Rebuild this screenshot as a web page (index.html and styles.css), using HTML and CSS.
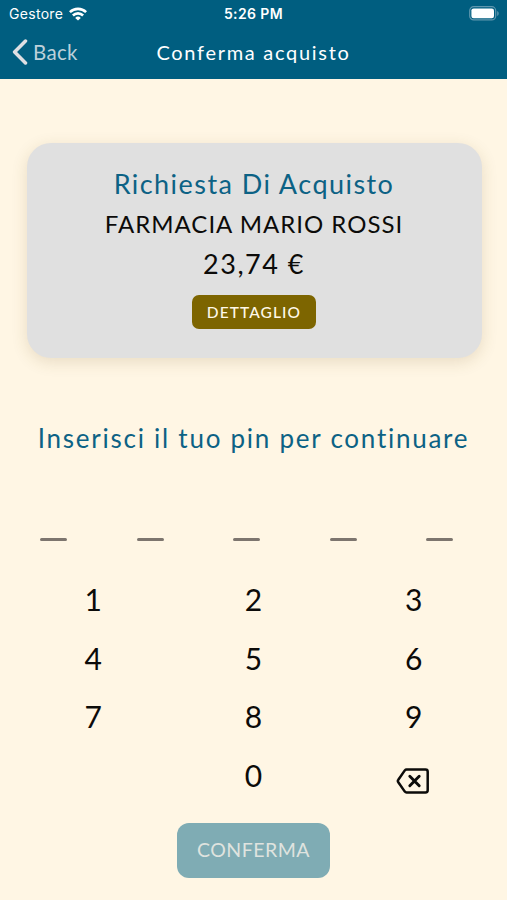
FILE: index.html
```html
<!DOCTYPE html>
<html lang="it">
<head>
<meta charset="utf-8">
<meta name="viewport" content="width=device-width, initial-scale=1">
<title>Conferma acquisto</title>
<link rel="stylesheet" href="styles.css">
</head>
<body>
<header class="header">
  <div class="status">
    <div class="carrier"><span>Gestore</span>
      <svg class="wifi" viewBox="0 0 18 14" width="18" height="14"><g fill="none" stroke="#fff" stroke-width="2.600"><path d="M.9 5.2a11.5 11.5 0 0 1 16.2 0"/><path d="M3.9 8.500a7.2 7.2 0 0 1 10.2 0"/></g><path d="M9 13.6 6.2 10.9a4 4 0 0 1 5.6 0Z" fill="#fff"/></svg>
    </div>
    <time class="clock">5:26 PM</time>
    <svg class="battery" viewBox="0 0 31 15" width="31" height="15"><rect x=".7" y=".7" width="26" height="13.2" rx="4" fill="none" stroke="#5f97ae" stroke-width="1.2"/><rect x="2.4" y="2.4" width="22.6" height="9.8" rx="2.2" fill="#fff"/><path d="M28.2 5v5c2-.8 2-4.200 0-5Z" fill="#5f97ae"/></svg>
  </div>
  <nav class="nav">
    <a class="back"><svg viewBox="0 0 16 26" width="16" height="26"><path d="M13.500 2 2.600 13l10.900 11" fill="none" stroke="#dedfe3" stroke-width="3.500" stroke-linecap="round" stroke-linejoin="round"/></svg><span>Back</span></a>
    <h1 class="title">Conferma acquisto</h1>
  </nav>
</header>
<main class="main">
  <section class="card">
    <h2 class="request">Richiesta Di Acquisto</h2>
    <p class="merchant">FARMACIA MARIO ROSSI</p>
    <p class="price">23,74 €</p>
    <button class="detail">DETTAGLIO</button>
  </section>
  <p class="prompt">Inserisci il tuo pin per continuare</p>
  <div class="pin"><i></i><i></i><i></i><i></i><i></i></div>
  <div class="keys">
    <span>1</span><span>2</span><span>3</span>
    <span>4</span><span>5</span><span>6</span>
    <span>7</span><span>8</span><span>9</span>
    <span></span><span>0</span>
    <span class="erase"><svg viewBox="0 0 34 28" width="34" height="28"><g fill="none" stroke="#0c0b09" stroke-width="2.500" stroke-linecap="round" stroke-linejoin="round"><path d="M10.500 2.500h19a2.200 2.200 0 0 1 2.200 2.200v18.600a2.200 2.200 0 0 1-2.200 2.200h-19q-1 0-1.700-.9L2.300 15.200q-.9-1.200 0-2.400L8.800 3.400q.7-.9 1.700-.9Z"/><path d="m13.800 9.300 9.400 9.400m0-9.400-9.400 9.400" stroke-width="2.900"/></g></svg></span>
  </div>
  <button class="confirm">CONFERMA</button>
</main>
</body>
</html>
```
FILE: styles.css
```css
* { box-sizing: border-box; }
body { margin: 0; width: 507px; height: 900px; overflow: hidden; background: #fff6e4; color: #0c0b09; font-family: Lato, "Noto Sans", sans-serif; }
h1, h2, p { margin: 0; font-weight: 400; white-space: nowrap; }
button { border: 0; padding: 0; font-family: inherit; }
svg { display: block; flex: none; }
.header { height: 79px; background: #005e80; color: #fff; }
.status { height: 27px; display: grid; grid-template-columns: 1fr auto 1fr; align-items: center; padding: 0 7px 0 9px; font-family: Inter, sans-serif; }
.carrier { display: flex; align-items: center; gap: 6px; font-size: 14px; letter-spacing: 0.3px; }
.clock { font-size: 14px; font-weight: 600; letter-spacing: 0.4px; margin-right: 2px; }
.battery { justify-self: end; }
.nav { height: 50px; display: grid; grid-template-columns: 1fr auto 1fr; align-items: center; padding: 0 12px; }
.back { display: flex; align-items: center; gap: 5px; font-size: 20.500px; line-height: 26px; letter-spacing: 0.3px; color: #bdd0da; }
.title { font-size: 20px; line-height: 26px; letter-spacing: 1.700px; }
.main { display: flex; flex-direction: column; align-items: center; }
.card { width: 455px; height: 215px; margin: 64px 0 0 1px; padding-top: 21px; display: flex; flex-direction: column; align-items: center; border-radius: 24px; background: #e0e0e0; box-shadow: 0 4px 16px rgba(110, 85, 30, 0.16); }
.request { height: 40px; line-height: 40px; font-size: 27px; letter-spacing: 1.450px; color: #0c6285; }
.merchant { height: 40px; line-height: 40px; font-size: 24px; letter-spacing: 1px; }
.price { height: 40px; line-height: 40px; font-size: 27px; letter-spacing: 1.500px; }
.detail { width: 124px; height: 34px; margin-top: 11px; border-radius: 7px; background: #7d6500; color: #fff8e8; font-size: 15.500px; font-weight: 500; letter-spacing: 1.100px; }
.prompt { margin-top: 60px; height: 40px; line-height: 40px; font-size: 26px; letter-spacing: 1.750px; color: #0c6285; }
.pin { width: 413px; margin: 80px 14px 0 0; display: flex; justify-content: space-between; }
.pin i { width: 27px; height: 3px; border-radius: 1.500px; background: #7d756e; }
.keys { width: 481px; margin-top: 29px; display: grid; grid-template-columns: repeat(3, 1fr); grid-auto-rows: 58.600px; font-size: 30px; line-height: 58.600px; text-align: center; }
.erase { display: flex; justify-content: center; align-items: center; padding: 12px 2px 0 0; }
.confirm { width: 153px; height: 55px; margin-top: 19px; padding-bottom: 3px; border-radius: 12px; background: #7facb4; color: #dfe3df; font-size: 19.500px; letter-spacing: 0.500px; }
```
